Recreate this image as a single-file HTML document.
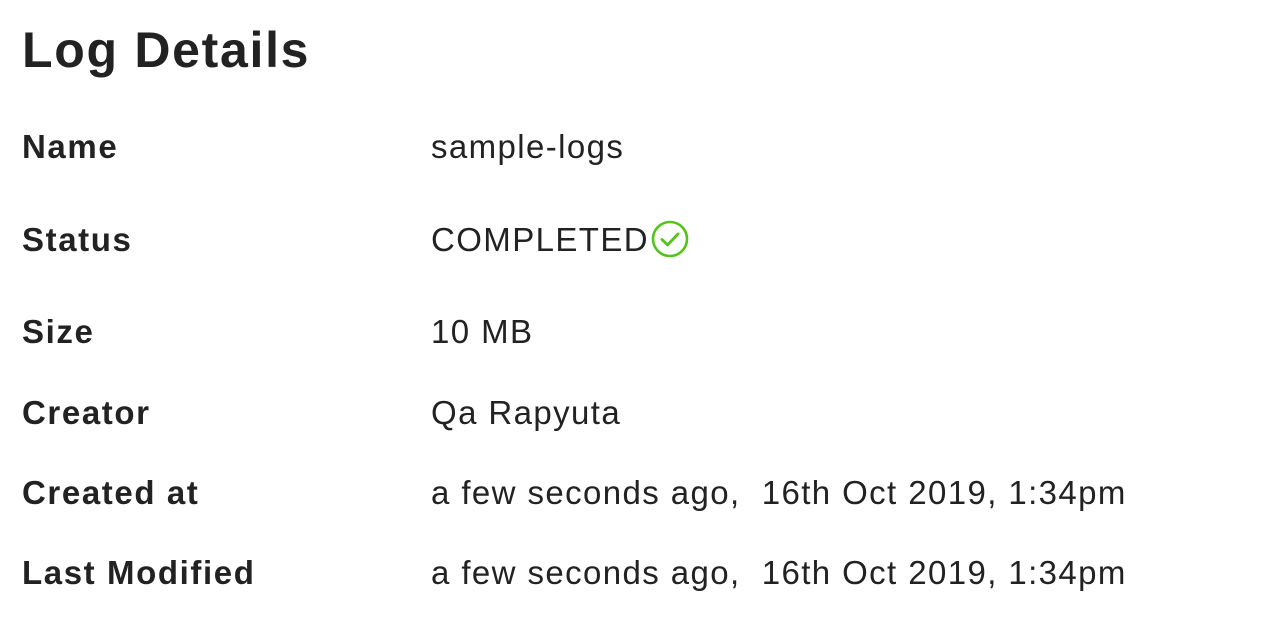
<!DOCTYPE html>
<html><head><meta charset="utf-8"><style>
html,body{margin:0;padding:0;background:#fff;width:1266px;height:638px;overflow:hidden}
body{font-family:"Liberation Sans",sans-serif;color:#222}
h1{position:absolute;left:22px;top:14px;margin:0;font-size:50px;font-weight:bold;line-height:72px;letter-spacing:1.7px}
.r{position:absolute;left:22px;font-size:33px;line-height:40px;white-space:nowrap}
.r b{position:absolute;left:0;top:0;width:400px;letter-spacing:1.6px}
.r span{position:absolute;left:409px;top:0;letter-spacing:1.4px}
svg{vertical-align:middle}
</style></head><body>
<h1>Log Details</h1>
<div class="r" style="top:127px"><b>Name</b><span>sample-logs</span></div>
<div class="r" style="top:220px"><b>Status</b><span>COMPLETED<svg width="40" height="40" viewBox="0 0 40 40" style="margin-top:-5px;margin-left:2px"><circle cx="19" cy="19" r="17" fill="none" stroke="#52c41a" stroke-width="2.6"/><path d="M11 19.5l5.5 5.5L27 14" fill="none" stroke="#52c41a" stroke-width="2.8" stroke-linecap="round" stroke-linejoin="round"/></svg></span></div>
<div class="r" style="top:312px"><b>Size</b><span>10 MB</span></div>
<div class="r" style="top:393px"><b>Creator</b><span>Qa Rapyuta</span></div>
<div class="r" style="top:473px"><b>Created at</b><span>a few seconds ago,&nbsp; 16th Oct 2019, 1:34pm</span></div>
<div class="r" style="top:553px"><b>Last Modified</b><span>a few seconds ago,&nbsp; 16th Oct 2019, 1:34pm</span></div>
</body></html>
